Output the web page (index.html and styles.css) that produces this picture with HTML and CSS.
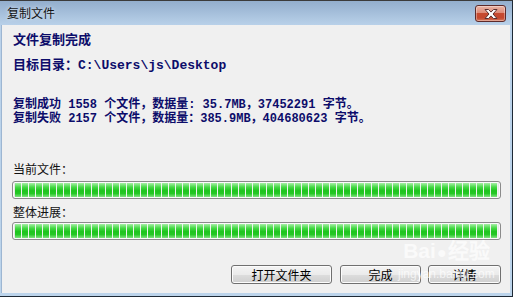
FILE: index.html
```html
<!DOCTYPE html>
<html lang="zh-CN">
<head>
<meta charset="UTF-8">
<title>复制文件</title>
<link rel="stylesheet" href="styles.css">
</head>
<body>
<div class="window">
  <div class="titlebar">
    <span class="title">复制文件</span>
    <button class="closeBtn" aria-label="关闭">
      <svg width="16" height="10" viewBox="0 0 16 10"><path d="M2 0.5h3.5l2.5 2.6 2.5-2.6h3.5l-4 4.5 4 4.5h-3.5l-2.5-2.6-2.5 2.6h-3.5l4-4.5z" fill="#fff" stroke="#5a3030" stroke-width="1" stroke-linejoin="round"/></svg>
    </button>
  </div>
  <div class="client">
    <div class="heading">文件复制完成</div>
    <div class="dest">目标目录：C:\Users\js\Desktop</div>
    <div class="stats">
      <div>复制成功 1558 个文件，数据量: 35.7MB，37452291 字节。</div>
      <div>复制失败 2157 个文件，数据量：385.9MB，404680623 字节。</div>
    </div>
    <div class="label first">当前文件：</div>
    <div class="bar"><div class="fill"></div></div>
    <div class="label">整体进展：</div>
    <div class="bar tight"><div class="fill"></div></div>
    <div class="buttonGroup">
      <button id="openBtn">打开文件夹</button>
      <button id="doneBtn">完成</button>
      <button id="detailBtn">详情</button>
    </div>
    <div class="watermark">
      <span class="wmLogo">Bai<span class="paw">●</span>经验</span>
      <span class="wmUrl">jingyan.baidu.com</span>
    </div>
  </div>
</div>
</body>
</html>
```
FILE: styles.css
```css
html, body { margin:0; padding:0; overflow:hidden; }
body { width:513px; height:297px; font-family:"Noto Sans CJK SC",sans-serif; }
.window { box-sizing:border-box; width:513px; height:297px; display:flex; flex-direction:column; background:linear-gradient(#93aecd 0, #bad2ea 25px, #bcd4eb 100%); border-top:1px solid #3b3b3b; border-right:1px solid #1e2a36; border-bottom:1px solid #1e2a36; padding:0 2px 3px 1px; position:relative; }
.titlebar { height:24px; display:flex; align-items:flex-start; justify-content:space-between; }
.title { font-size:12px; line-height:14px; color:#141414; margin:5px 0 0 6px; text-shadow:0 0 4px rgba(255,255,255,0.7); }
.closeBtn { box-sizing:border-box; width:31px; height:17px; margin:4px 4px 0 0; padding:0; border:1px solid #5d2a2a; border-radius:3px; background:linear-gradient(#eab4a5 0, #de8b78 45%, #c64a30 50%, #c4482f 80%, #d77a5d 100%); display:flex; align-items:center; justify-content:center; box-shadow:inset 0 0 0 1px rgba(255,255,255,0.35); }
.client { flex:1; background:#f0f0f0; padding:0 9px 0 10px; display:flex; flex-direction:column; position:relative; border-left:1px solid #9db6d2; }
.heading { font-size:13px; font-weight:bold; line-height:16px; color:#0c0c6a; margin-top:6px; padding-left:1px; }
.dest { font-family:"Liberation Mono","Noto Sans CJK SC",monospace; font-size:13px; font-weight:bold; line-height:16px; color:#0c0c6a; margin-top:11px; padding-left:1px; }
.stats { font-family:"Liberation Mono","Noto Sans CJK SC",monospace; font-size:12px; font-weight:bold; line-height:14px; color:#0c0c6a; margin-top:24px; padding-left:1px; white-space:nowrap; }
.label { font-size:12px; line-height:16px; color:#111; margin-top:5px; padding-left:1px; }
.label.first { margin-top:35px; }
.bar { box-sizing:border-box; height:18px; margin-top:4px; border:1px solid #8b8b8b; border-radius:3px; background:#e6e6e6; padding:1px 2px 1px 2px; box-shadow:inset 0 0 0 1px #fbfbfb; }
.bar.tight { margin-top:2px; }
.fill { height:100%; background:repeating-linear-gradient(90deg, transparent 0 6px, #eef3ee 6px 7px), linear-gradient(#a6efa6 0, #45d845 30%, #1dc41d 55%, #25c825 75%, #7fe27f 100%); }
.buttonGroup { display:flex; justify-content:flex-end; gap:8px; margin-top:25px; }
.buttonGroup button { box-sizing:border-box; height:19px; padding:0; font-family:"Noto Sans CJK SC",sans-serif; font-size:12px; line-height:15px; color:#000; border:1px solid #707070; border-radius:3px; background:linear-gradient(#f4f4f4 0, #ebebeb 50%, #dddddd 51%, #cfcfcf 100%); box-shadow:inset 0 0 0 1px #fcfcfc; }
#openBtn { width:101px; }
#doneBtn { width:81px; }
#detailBtn { width:73px; margin-left:-1px; }
.watermark { position:absolute; left:396px; top:215px; display:flex; flex-direction:column; align-items:center; color:rgba(255,255,255,0.7); pointer-events:none; }
.wmLogo { font-family:"Liberation Sans",sans-serif; font-size:21px; font-weight:bold; line-height:22px; }
.paw { font-size:16px; margin:0 1px; }
.wmUrl { font-family:"Liberation Sans",sans-serif; font-size:12px; line-height:14px; margin-top:3px; }
```
